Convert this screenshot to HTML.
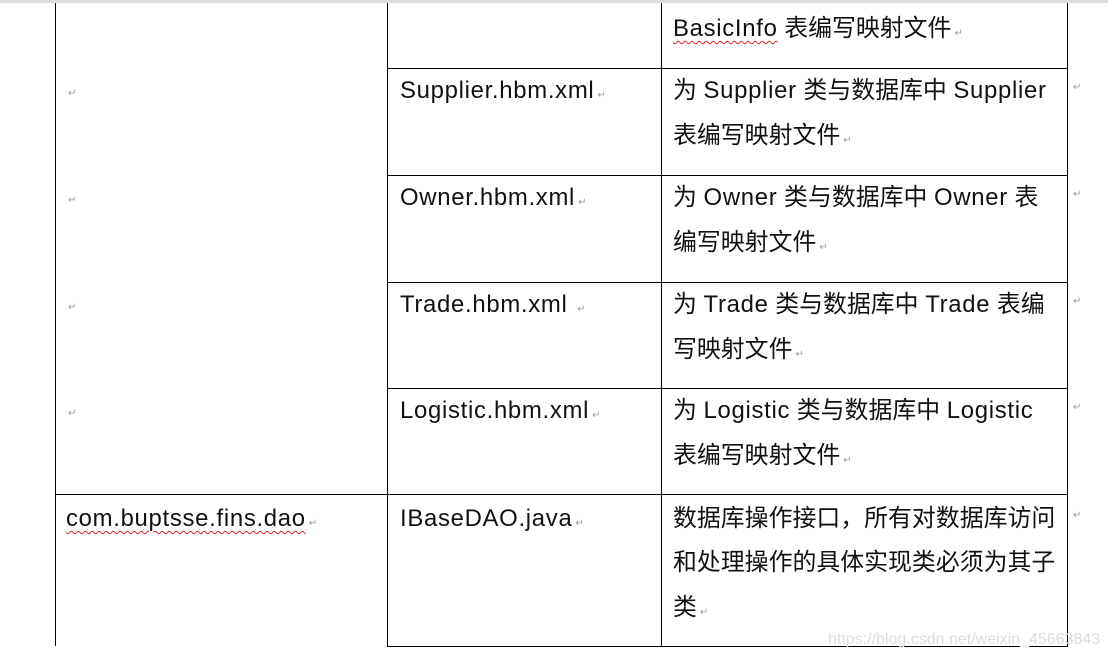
<!DOCTYPE html><html><head><meta charset="utf-8"><style>
body{margin:0;width:1108px;height:661px;background:#fff;position:relative;overflow:hidden;font-family:"Liberation Sans","Noto Sans CJK SC",sans-serif;color:#111}
.l{position:absolute;background:#000}
.t{position:absolute;font-size:23.9px;white-space:nowrap;line-height:28px}
.e{letter-spacing:0.7px}
.m{color:#999;font-size:10px;margin-left:3px}
.p{position:absolute;color:#999;font-size:10px}
.w{text-decoration:underline wavy #d22;text-decoration-thickness:1px;text-underline-offset:4px}
</style></head><body>
<div style="position:absolute;left:0;top:0;width:1108px;height:3px;background:#ddd"></div>
<div class="l" style="left:55px;top:3px;width:1px;height:643px"></div>
<div class="l" style="left:387px;top:3px;width:1px;height:644px"></div>
<div class="l" style="left:661px;top:3px;width:1px;height:644px"></div>
<div class="l" style="left:1067px;top:3px;width:1px;height:644px"></div>
<div class="l" style="left:387px;top:68px;width:681px;height:1px"></div>
<div class="l" style="left:387px;top:175px;width:681px;height:1px"></div>
<div class="l" style="left:387px;top:282px;width:681px;height:1px"></div>
<div class="l" style="left:387px;top:388px;width:681px;height:1px"></div>
<div class="l" style="left:55px;top:494px;width:1013px;height:1px"></div>
<div class="l" style="left:387px;top:646px;width:681px;height:1px"></div>
<div class="t" style="left:673px;top:15px"><span class="w e">BasicInfo</span> 表编写映射文件<span class="m">↵</span></div>
<div class="p" style="left:68px;top:88px">↵</div><div class="p" style="left:68px;top:195px">↵</div><div class="p" style="left:68px;top:302px">↵</div><div class="p" style="left:68px;top:408px">↵</div>
<div class="p" style="left:1073px;top:82px">↵</div><div class="p" style="left:1073px;top:189px">↵</div><div class="p" style="left:1073px;top:296px">↵</div><div class="p" style="left:1073px;top:402px">↵</div><div class="p" style="left:1073px;top:510px">↵</div>
<div class="t" style="left:400px;top:77px"><span class="e">Supplier.hbm.xml</span><span class="m">↵</span></div>
<div class="t" style="left:673px;top:77px">为 <span class="e">Supplier</span> 类与数据库中 <span class="e">Supplier</span></div>
<div class="t" style="left:673px;top:122px">表编写映射文件<span class="m">↵</span></div>
<div class="t" style="left:400px;top:184px"><span class="e">Owner.hbm.xml</span><span class="m">↵</span></div>
<div class="t" style="left:673px;top:184px">为 <span class="e">Owner</span> 类与数据库中 <span class="e">Owner</span> 表</div>
<div class="t" style="left:673px;top:229px">编写映射文件<span class="m">↵</span></div>
<div class="t" style="left:400px;top:291px"><span class="e">Trade.hbm.xml</span> <span class="m">↵</span></div>
<div class="t" style="left:673px;top:291px">为 <span class="e">Trade</span> 类与数据库中 <span class="e">Trade</span> 表编</div>
<div class="t" style="left:673px;top:336px">写映射文件<span class="m">↵</span></div>
<div class="t" style="left:400px;top:397px"><span class="e">Logistic.hbm.xml</span><span class="m">↵</span></div>
<div class="t" style="left:673px;top:397px">为 <span class="e">Logistic</span> 类与数据库中 <span class="e">Logistic</span></div>
<div class="t" style="left:673px;top:442px">表编写映射文件<span class="m">↵</span></div>
<div class="t" style="left:66px;top:505px"><span class="w e">com.buptsse.fins.dao</span><span class="m">↵</span></div>
<div class="t" style="left:400px;top:505px"><span class="e">IBaseDAO.java</span><span class="m">↵</span></div>
<div class="t" style="left:673px;top:505px">数据库操作接口，所有对数据库访问</div>
<div class="t" style="left:673px;top:549px">和处理操作的具体实现类必须为其子</div>
<div class="t" style="left:673px;top:594px">类<span class="m">↵</span></div>
<div style="position:absolute;left:828px;top:631px;color:#ddd;font-size:16px">https://blog.csdn.net/weixin_45663843</div>
</body></html>
